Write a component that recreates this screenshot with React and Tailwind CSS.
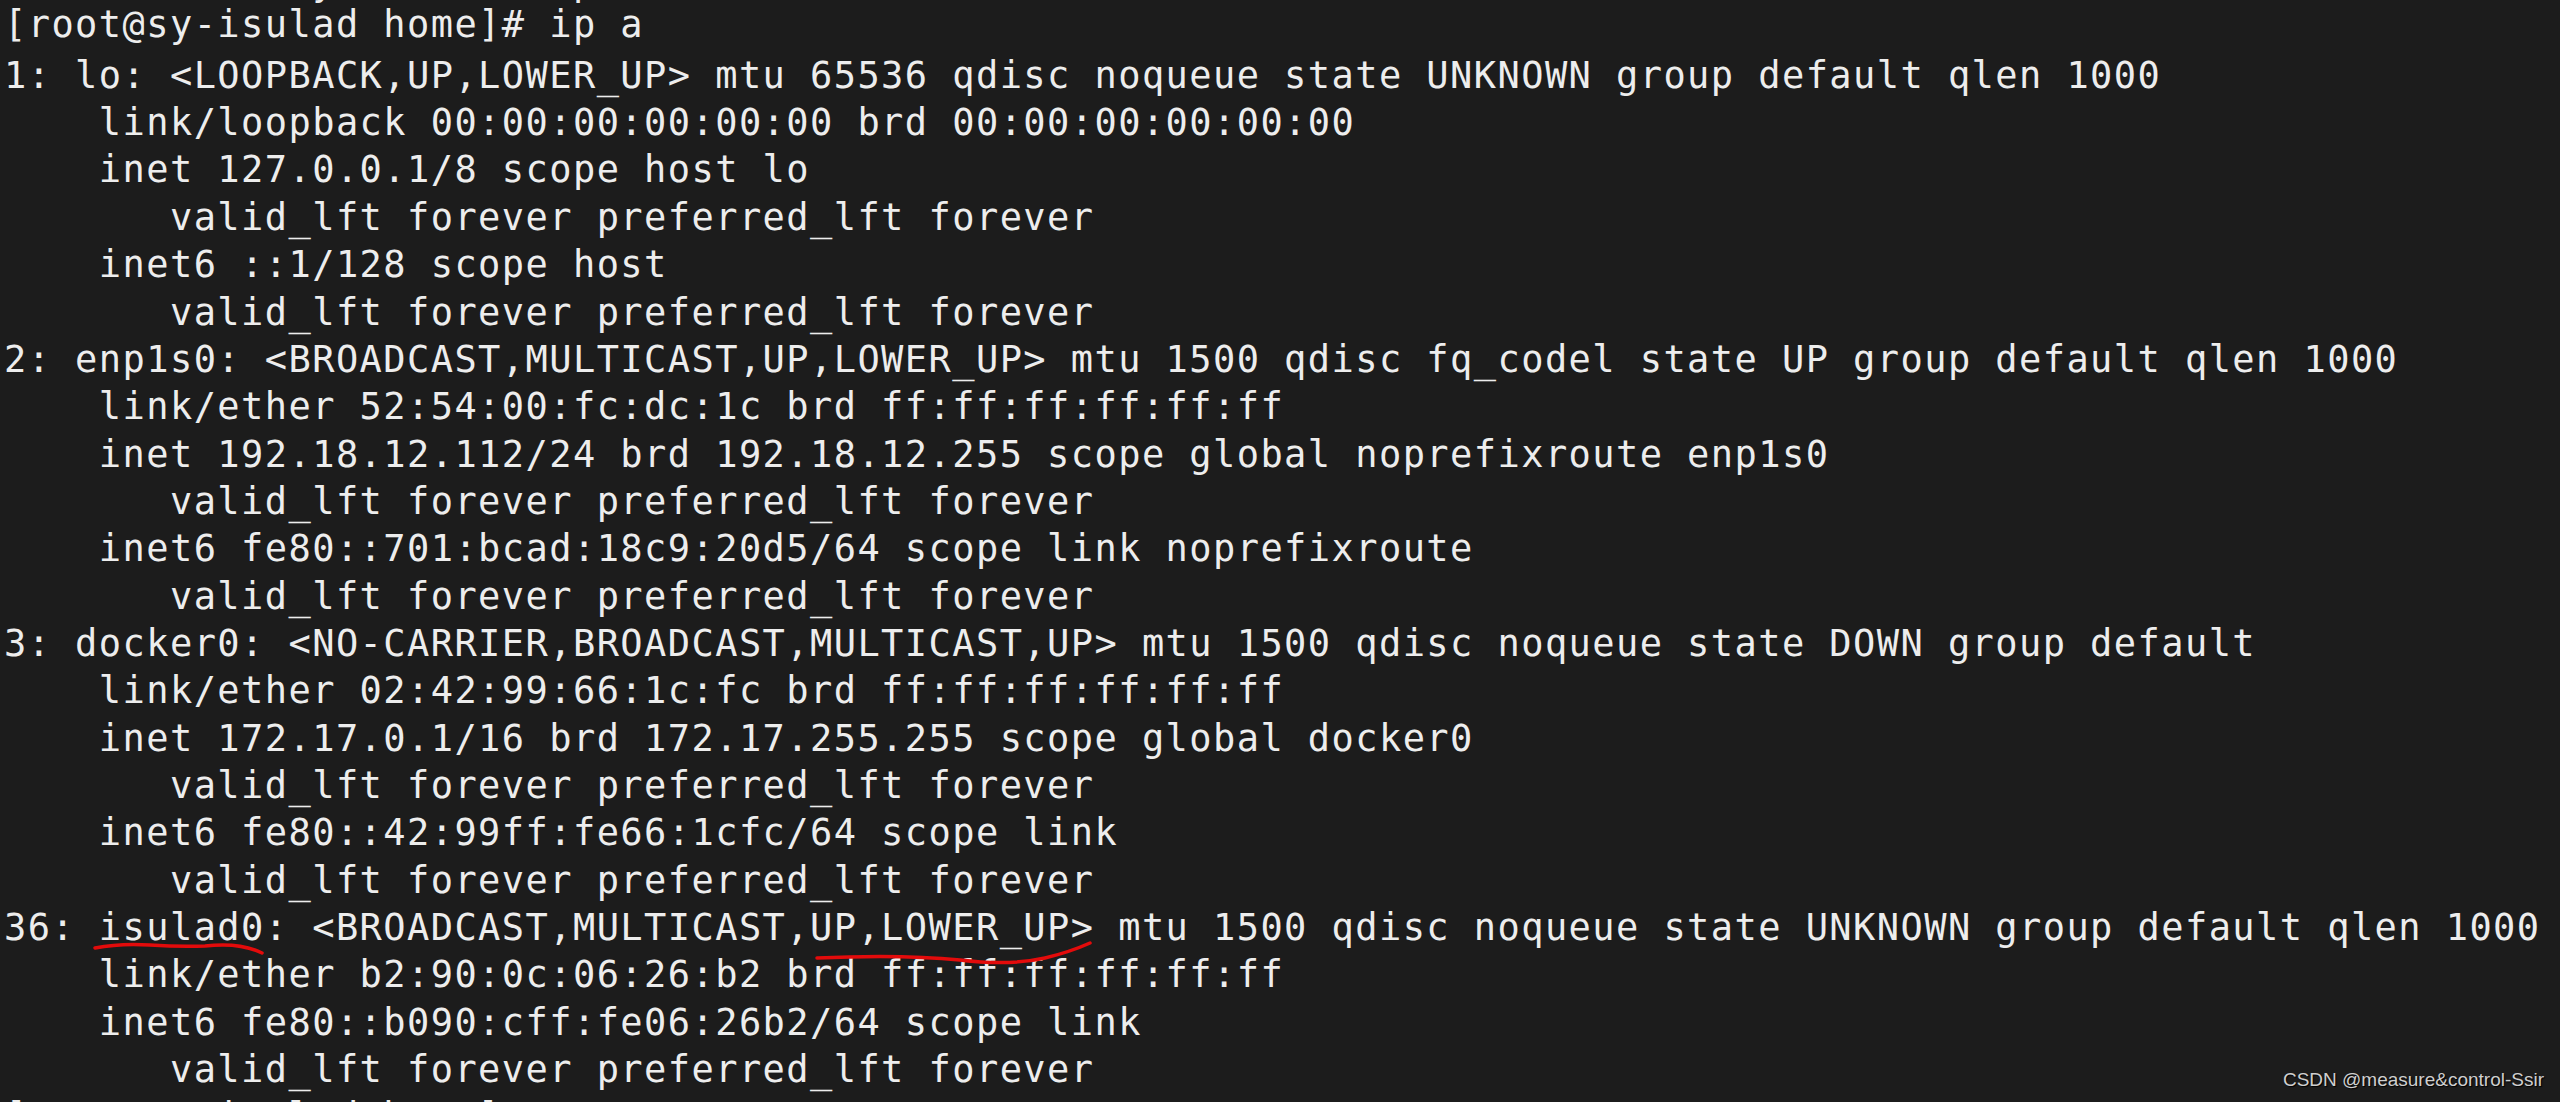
import React from 'react';

const lines = [
  '[root@sy-isulad home]# ip a',
  '1: lo: <LOOPBACK,UP,LOWER_UP> mtu 65536 qdisc noqueue state UNKNOWN group default qlen 1000',
  '    link/loopback 00:00:00:00:00:00 brd 00:00:00:00:00:00',
  '    inet 127.0.0.1/8 scope host lo',
  '       valid_lft forever preferred_lft forever',
  '    inet6 ::1/128 scope host',
  '       valid_lft forever preferred_lft forever',
  '2: enp1s0: <BROADCAST,MULTICAST,UP,LOWER_UP> mtu 1500 qdisc fq_codel state UP group default qlen 1000',
  '    link/ether 52:54:00:fc:dc:1c brd ff:ff:ff:ff:ff:ff',
  '    inet 192.18.12.112/24 brd 192.18.12.255 scope global noprefixroute enp1s0',
  '       valid_lft forever preferred_lft forever',
  '    inet6 fe80::701:bcad:18c9:20d5/64 scope link noprefixroute',
  '       valid_lft forever preferred_lft forever',
  '3: docker0: <NO-CARRIER,BROADCAST,MULTICAST,UP> mtu 1500 qdisc noqueue state DOWN group default',
  '    link/ether 02:42:99:66:1c:fc brd ff:ff:ff:ff:ff:ff',
  '    inet 172.17.0.1/16 brd 172.17.255.255 scope global docker0',
  '       valid_lft forever preferred_lft forever',
  '    inet6 fe80::42:99ff:fe66:1cfc/64 scope link',
  '       valid_lft forever preferred_lft forever',
  '36: isulad0: <BROADCAST,MULTICAST,UP,LOWER_UP> mtu 1500 qdisc noqueue state UNKNOWN group default qlen 1000',
  '    link/ether b2:90:0c:06:26:b2 brd ff:ff:ff:ff:ff:ff',
  '    inet6 fe80::b090:cff:fe06:26b2/64 scope link',
  '       valid_lft forever preferred_lft forever',
];

const Line = ({ text, className = 'h-[47.35px]' }) => (
  <div className={`whitespace-pre leading-[47.35px] ${className}`}>{text}</div>
);

export default function App() {
  return (
    <div className="relative w-[2560px] h-[1102px] overflow-hidden bg-[#1c1c1c]">
      <div className="flex flex-col pl-[4px] -mt-[41.5px] text-[37px] tracking-[1.43px] text-[#ededed] font-['DejaVu_Sans_Mono',monospace]">
        {/* tail of the previous prompt, cut off at the top */}
        <Line text="             y          p" className="h-[42px] shrink-0" />
        <Line text={lines[0]} className="h-[51.3px] shrink-0" />
        {lines.slice(1).map((l, i) => (
          <Line key={i} text={l} className="h-[47.35px] shrink-0" />
        ))}
        <Line text="[root@sy-isulad home]# " className="h-[47.35px] shrink-0" />
      </div>

      {/* hand drawn red marks */}
      <svg className="absolute inset-0 pointer-events-none" width="2560" height="1102" viewBox="0 0 2560 1102">
        <path
          d="M95 948 Q120 943 150 945 T205 946 Q240 942 262 953"
          fill="none"
          stroke="#e30b0b"
          strokeWidth="3.5"
          strokeLinecap="round"
        />
        <path
          d="M817 958 Q900 954 960 960 Q1010 966 1045 958 Q1070 952 1090 943"
          fill="none"
          stroke="#e30b0b"
          strokeWidth="3.5"
          strokeLinecap="round"
        />
      </svg>

      <div className="absolute right-[16px] bottom-[8px] text-[19px] text-[#cfcfcf] font-['Liberation_Sans',sans-serif] [text-shadow:1px_1px_1px_#000]">
        CSDN @measure&amp;control-Ssir
      </div>
    </div>
  );
}
